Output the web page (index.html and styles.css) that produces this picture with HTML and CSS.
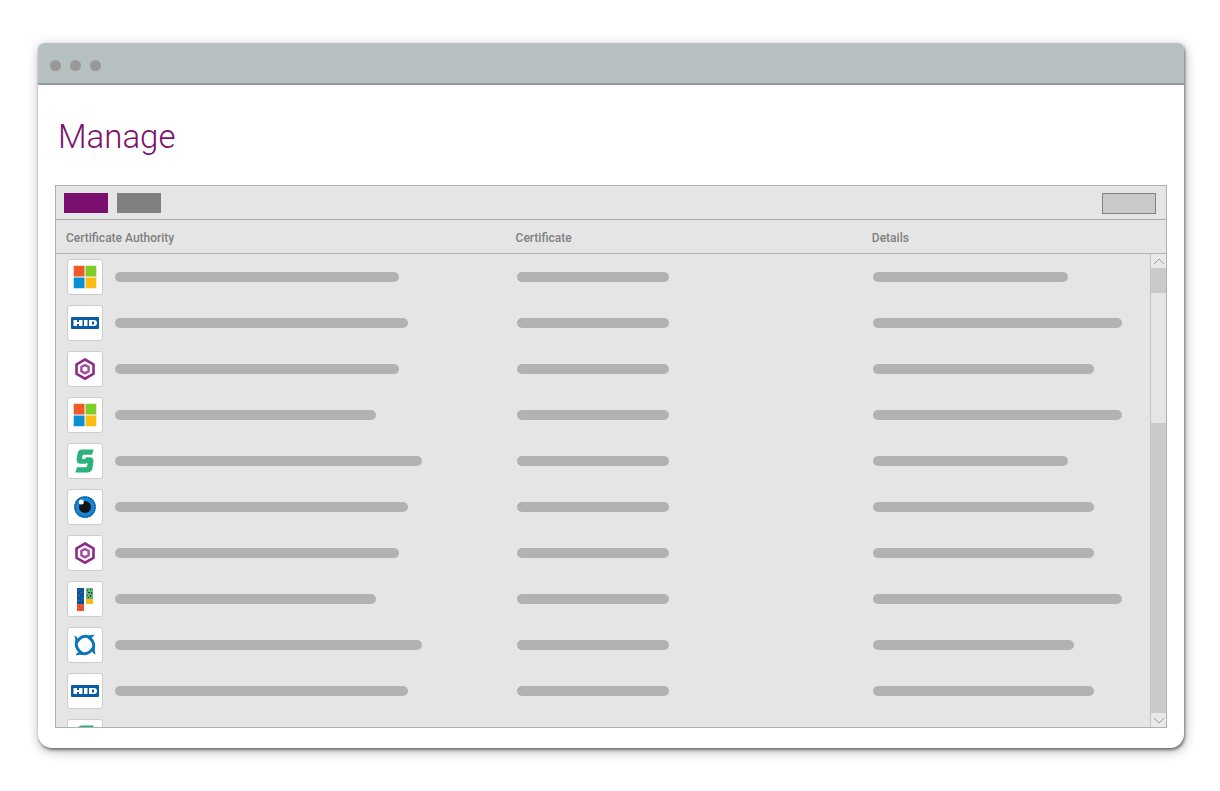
FILE: index.html
```
<!DOCTYPE html>
<html lang="en">
<head>
<meta charset="utf-8">
<title>Manage</title>
<link rel="stylesheet" href="styles.css">
</head>
<body>
<svg class="sprite" aria-hidden="true">
  <symbol id="windows" viewBox="0 0 34 34">
    <path fill="#f05a28" d="M5.700 5.700h10.800v10.800H5.700z"/><path fill="#80cc28" d="M17.500 5.700h10.800v10.800H17.500z"/>
    <path fill="#0a8fd6" d="M5.700 17.500h10.800v10.800H5.700z"/><path fill="#fdbc14" d="M17.500 17.500h10.800v10.800H17.500z"/>
  </symbol>
  <symbol id="hid" viewBox="0 0 34 34">
    <rect x="3" y="11" width="28" height="12" rx="1" fill="#0b5aa5"/>
    <path fill="#fff" fill-rule="evenodd" d="M5.500 14H9v2h2v-2h3.500v6H11v-2H9v2H5.500zM16 14h3.500v6H16zM21 14h5q3 0 3 3t-3 3h-5zM24 15.500v3h1.200q1 0 1-1.500t-1-1.500z"/>
  </symbol>
  <symbol id="hex" viewBox="0 0 34 34">
    <g fill="none" stroke="#8c2a8a"><path stroke-width="2.600" d="M17 7.500l8.500 4.900v9.400L17 26.700l-8.500-4.900v-9.400z"/>
    <path stroke="#a04a9e" stroke-width="2.400" d="M17 13l3.600 2v4.200L17 21.300l-3.600-2.100V15z"/></g>
  </symbol>
  <symbol id="link-s" viewBox="0 0 34 34">
    <path fill="#2bb27b" d="M13.500 5.500h12.200l-1.700 5.300h-8q-1.300 0-1.500 1.200l-.4 2q-.1 1 1 1h3v4.700h-6q-4-.3-3.400-4.600l.8-5.100Q9.800 5.800 13.500 5.500z"/>
    <path fill="#2bb27b" d="M17.500 13.300h4.500q4 .3 3.400 4.700l-.8 5.500q-.6 4.700-4.800 5H7.300L9 23.200h8.600q1.300 0 1.500-1.200l.4-2q.1-1-1-1h-1z"/>
  </symbol>
  <symbol id="eye" viewBox="0 0 34 34">
    <circle cx="17" cy="17" r="10.800" fill="#1687d0"/>
    <circle cx="17" cy="17" r="10" fill="none" stroke="#075b9d" stroke-width="1.600" stroke-dasharray="1.500 1"/>
    <circle cx="17" cy="17" r="6" fill="#10151a"/><circle cx="13.300" cy="12" r="2.500" fill="#fff"/>
  </symbol>
  <symbol id="blocks" viewBox="0 0 34 34">
    <path fill="#0d539b" d="M9 6h7v16H9z"/><path fill="#f1532d" d="M9 22h7v7H9z"/>
    <path fill="#63b879" d="M18 6h7v11h-7z"/><path fill="#fdb913" d="M18 17h7v5h-7z"/>
    <path fill="#17334a" d="M19 8h1v1h-1zM22 7h1v1h-1zM20 10h2v1h-2zM23 10h1v2h-1zM19 13h1v1h-1zM22 13h1v2h-1zM20 15h1v1h-1z"/>
    <path fill="#4d91c5" d="M10 8h1v1h-1zM13 10h1v1h-1zM11 13h1v1h-1zM14 16h1v1h-1zM10 18h1v1h-1z"/>
    <path fill="#983f72" d="M11 24h1v1h-1zM14 25h1v1h-1zM12 27h1v1h-1z"/>
  </symbol>
  <symbol id="swirl" viewBox="0 0 34 34">
    <g fill="#0c74b9">
      <path id="blade" d="M7.500 14Q11.500 6.500 18 6.800 22.500 8 26.500 6.500 25 10 21.500 10.200 14 8 10 15z"/>
      <use href="#blade" transform="rotate(90 17 17)"/><use href="#blade" transform="rotate(180 17 17)"/><use href="#blade" transform="rotate(270 17 17)"/>
    </g>
  </symbol>
</svg>
<main class="window">
  <header class="titlebar"><span class="dot"></span><span class="dot"></span><span class="dot"></span></header>
  <div class="content">
    <h1 class="title">Manage</h1>
    <section class="panel">
      <div class="toolbar">
        <button class="btn btn-primary" type="button" aria-label="Add"></button>
        <button class="btn" type="button" aria-label="Edit"></button>
        <button class="btn btn-outline" type="button" aria-label="Options"></button>
      </div>
      <div class="list">
        <table class="table">
          <thead><tr><th class="col-authority">Certificate Authority</th><th class="col-certificate">Certificate</th><th>Details</th></tr></thead>
          <tbody>
            <tr><td><div class="authority"><svg class="logo"><use href="#windows"/></svg><span class="bar" style="width:284px"></span></div></td><td><span class="bar" style="width:152px"></span></td><td><span class="bar" style="width:195px"></span></td></tr>
            <tr><td><div class="authority"><svg class="logo"><use href="#hid"/></svg><span class="bar" style="width:293px"></span></div></td><td><span class="bar" style="width:152px"></span></td><td><span class="bar" style="width:249px"></span></td></tr>
            <tr><td><div class="authority"><svg class="logo"><use href="#hex"/></svg><span class="bar" style="width:284px"></span></div></td><td><span class="bar" style="width:152px"></span></td><td><span class="bar" style="width:221px"></span></td></tr>
            <tr><td><div class="authority"><svg class="logo"><use href="#windows"/></svg><span class="bar" style="width:261px"></span></div></td><td><span class="bar" style="width:152px"></span></td><td><span class="bar" style="width:249px"></span></td></tr>
            <tr><td><div class="authority"><svg class="logo"><use href="#link-s"/></svg><span class="bar" style="width:307px"></span></div></td><td><span class="bar" style="width:152px"></span></td><td><span class="bar" style="width:195px"></span></td></tr>
            <tr><td><div class="authority"><svg class="logo"><use href="#eye"/></svg><span class="bar" style="width:293px"></span></div></td><td><span class="bar" style="width:152px"></span></td><td><span class="bar" style="width:221px"></span></td></tr>
            <tr><td><div class="authority"><svg class="logo"><use href="#hex"/></svg><span class="bar" style="width:284px"></span></div></td><td><span class="bar" style="width:152px"></span></td><td><span class="bar" style="width:221px"></span></td></tr>
            <tr><td><div class="authority"><svg class="logo"><use href="#blocks"/></svg><span class="bar" style="width:261px"></span></div></td><td><span class="bar" style="width:152px"></span></td><td><span class="bar" style="width:249px"></span></td></tr>
            <tr><td><div class="authority"><svg class="logo"><use href="#swirl"/></svg><span class="bar" style="width:307px"></span></div></td><td><span class="bar" style="width:152px"></span></td><td><span class="bar" style="width:201px"></span></td></tr>
            <tr><td><div class="authority"><svg class="logo"><use href="#hid"/></svg><span class="bar" style="width:293px"></span></div></td><td><span class="bar" style="width:152px"></span></td><td><span class="bar" style="width:221px"></span></td></tr>
            <tr><td><div class="authority"><svg class="logo"><use href="#link-s"/></svg><span class="bar" style="width:284px"></span></div></td><td><span class="bar" style="width:152px"></span></td><td><span class="bar" style="width:195px"></span></td></tr>
          </tbody>
        </table>
        <div class="scrollbar">
          <button class="arrow" type="button" aria-label="Scroll up"><svg width="12" height="7" viewBox="0 0 12 7"><path d="M1 6l5-5 5 5"/></svg></button>
          <div class="track"><div class="thumb"></div></div>
          <button class="arrow" type="button" aria-label="Scroll down"><svg width="12" height="7" viewBox="0 0 12 7"><path d="M1 1l5 5 5-5"/></svg></button>
        </div>
      </div>
    </section>
  </div>
</main>
</body>
</html>
```
FILE: styles.css
```
* { box-sizing: border-box; }
body {
  margin: 0;
  height: 100vh;
  padding: 43px 36px 43px 38px;
  display: flex;
  background: #fff;
  font-family: Roboto, "Liberation Sans", sans-serif;
}
.sprite { position: absolute; width: 0; height: 0; }
.window {
  flex: 1;
  display: flex;
  flex-direction: column;
  min-width: 0;
  border-radius: 6px 6px 14px 14px;
  background: #fff;
  box-shadow: 1px 2px 3px rgba(0, 0, 0, .45), 1px 3px 12px rgba(0, 0, 0, .3);
}
.titlebar {
  display: flex;
  align-items: center;
  gap: 9px;
  height: 42px;
  padding: 4px 12px 0;
  border-bottom: 2px solid #969a9a;
  border-radius: 6px 6px 0 0;
  background: #b7c0c1;
}
.dot { width: 11px; height: 11px; border-radius: 50%; background: #989898; }
.content {
  flex: 1;
  display: flex;
  flex-direction: column;
  min-height: 0;
  padding: 32px 17px 20px;
}
.title {
  margin: 0 0 28px;
  padding-left: 3px;
  color: #7b0f6e;
  font-size: 33px;
  font-weight: 300;
  line-height: 40px;
}
.panel {
  flex: 1;
  display: flex;
  flex-direction: column;
  min-height: 0;
  border: 1px solid #abb2b2;
  background: #e5e5e5;
}
.toolbar {
  display: flex;
  gap: 9px;
  height: 34px;
  padding: 7px 10px 0 8px;
  border-bottom: 1px solid #a8acac;
}
.btn { width: 44px; height: 20px; padding: 0; border: 0; background: #808080; }
.btn-primary { background: #7b0f6e; }
.btn-outline { width: 54px; height: 21px; margin-left: auto; border: 1px solid #808080; background: #cacaca; }
.list { position: relative; flex: 1; min-height: 0; overflow: hidden; }
.table { width: 100%; table-layout: fixed; border-collapse: separate; border-spacing: 0; }
.table th {
  height: 34px;
  padding: 2px 0 0 10px;
  border-bottom: 1px solid #b2b4b4;
  color: #808080;
  font-size: 12px;
  font-weight: 500;
  text-align: left;
}
.table .col-authority { width: 40.5%; }
.table .col-certificate { width: 32.1%; }
.table td { height: 46px; padding: 0 0 0 11px; }
.authority { display: flex; align-items: center; gap: 12px; }
.logo {
  flex: none;
  width: 36px;
  height: 36px;
  border: 1px solid #cdcdcd;
  border-radius: 3px;
  background: #fff;
}
.bar { display: block; max-width: 100%; height: 10px; border-radius: 5px; background: #b2b2b2; }
.scrollbar {
  position: absolute;
  top: 34px;
  right: 0;
  bottom: 0;
  width: 16px;
  display: flex;
  flex-direction: column;
  border-left: 1px solid #c0c4c4;
}
.arrow {
  display: flex;
  align-items: center;
  justify-content: center;
  height: 14px;
  padding: 0;
  border: 0;
  background: #e9e9e9;
}
.arrow path { fill: none; stroke: #999; stroke-width: 1; }
.track { flex: 1; padding-top: 25px; background: #cacaca; }
.thumb { height: 130px; background: #e5e5e5; }
```
